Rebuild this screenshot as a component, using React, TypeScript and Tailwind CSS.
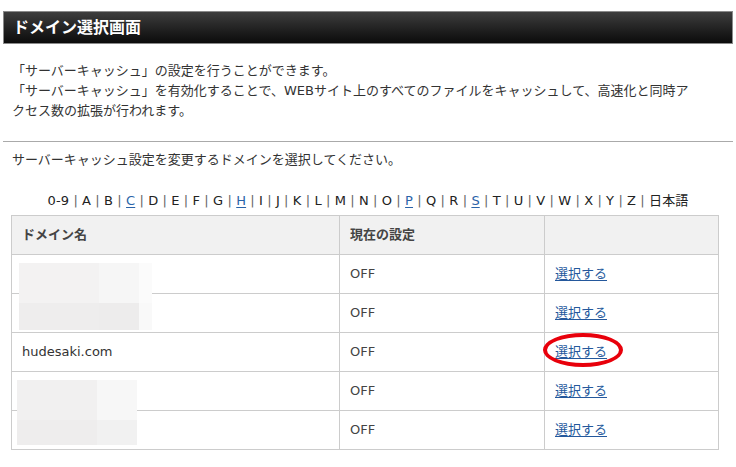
const font = { fontFamily: '"DejaVu Sans", "Noto Sans CJK JP", sans-serif' };

const letters = [
  "0-9", "A", "B", "C", "D", "E", "F", "G", "H", "I", "J", "K", "L", "M",
  "N", "O", "P", "Q", "R", "S", "T", "U", "V", "W", "X", "Y", "Z", "日本語",
];
const linked = ["C", "H", "P", "S"];

const rows = ["", "", "hudesaki.com", "", ""];

// pixelated blur block that hides a domain name
function Mosaic({ cols, top, bottom, splitAt }: { cols: number[]; top: string[]; bottom: string[]; splitAt: number }) {
  return (
    <div className="flex flex-col h-full">
      <div className="flex" style={{ height: splitAt }}>
        {top.map((c, i) => (
          <div key={i} style={{ width: cols[i], background: c }} />
        ))}
      </div>
      <div className="flex flex-1">
        {bottom.map((c, i) => (
          <div key={i} style={{ width: cols[i], background: c }} />
        ))}
      </div>
    </div>
  );
}

export default function App() {
  return (
    <div className="w-[736px] h-[467px] bg-white text-[#333] px-[3px] pt-[11px]" style={font}>
      <div className="h-[33px] border border-[#8a8a8a] bg-gradient-to-b from-[#3e3e3e] to-[#0c0c0c] flex items-center pl-[9px]">
        <h1 className="text-[16px] font-bold text-white leading-none">ドメイン選択画面</h1>
      </div>

      <div className="px-[9px] mt-[17px] text-[13px] leading-[20px]">
        <p className="whitespace-nowrap">「サーバーキャッシュ」の設定を行うことができます。</p>
        <p className="whitespace-nowrap">
          「サーバーキャッシュ」を有効化することで、WEBサイト上のすべてのファイルをキャッシュして、高速化と同時ア
          <br />
          クセス数の拡張が行われます。
        </p>
      </div>

      <div className="mt-[20px] h-px bg-[#aaaaaa]" />

      <p className="px-[9px] mt-[8px] text-[13px] leading-[20px]">
        サーバーキャッシュ設定を変更するドメインを選択してください。
      </p>

      <div className="mt-[21px] text-center text-[13px] leading-[20px] whitespace-nowrap tracking-[0.1px]">
        {letters.map((l, i) => (
          <span key={l}>
            {i > 0 && <span className="text-[#666]"> | </span>}
            {linked.includes(l) ? (
              <a className="text-[#2a63a8] underline underline-offset-2">{l}</a>
            ) : (
              <span className="text-[#222]">{l}</span>
            )}
          </span>
        ))}
      </div>

      <div className="relative mt-[4px] ml-[8px] w-[708px]">
        <table className="w-full border-collapse text-[13px] table-fixed">
          <colgroup>
            <col className="w-[328px]" />
            <col className="w-[205px]" />
            <col />
          </colgroup>
          <thead>
            <tr className="bg-[#f1f1f1]">
              <th className="h-[39px] border border-[#cccccc] text-left font-bold pl-[10px] text-[#444]">ドメイン名</th>
              <th className="h-[39px] border border-[#cccccc] text-left font-bold pl-[10px] text-[#444]">現在の設定</th>
              <th className="h-[39px] border border-[#cccccc]" />
            </tr>
          </thead>
          <tbody>
            {rows.map((d, i) => (
              <tr key={i}>
                <td className="h-[39px] border border-[#cccccc] pl-[10px] text-[#333]">{d}</td>
                <td className="h-[39px] border border-[#cccccc] pl-[10px] text-[#444]">OFF</td>
                <td className="h-[39px] border border-[#cccccc] pl-[10px]">
                  <a className="text-[#24589c] underline underline-offset-2">選択する</a>
                </td>
              </tr>
            ))}
          </tbody>
        </table>

        <div className="absolute left-[8px] top-[48px] h-[67px]">
          <Mosaic
            cols={[40, 40, 40, 13]}
            splitAt={40}
            top={["#f3f2f2", "#f3f2f2", "#f6f6f6", "#fbfbfb"]}
            bottom={["#eeeded", "#eeeded", "#edecec", "#f9f9f9"]}
          />
        </div>
        <div className="absolute left-[6px] top-[165px] h-[65px]">
          <Mosaic
            cols={[40, 40, 40]}
            splitAt={40}
            top={["#f1f0f0", "#f1f0f0", "#f7f7f7"]}
            bottom={["#eeeded", "#eeeded", "#f1f1f1"]}
          />
        </div>

        <div className="absolute left-[532px] top-[118px] w-[80px] h-[34px] rounded-[50%] border-[4px] border-[#e8000b]" />
      </div>
    </div>
  );
}
